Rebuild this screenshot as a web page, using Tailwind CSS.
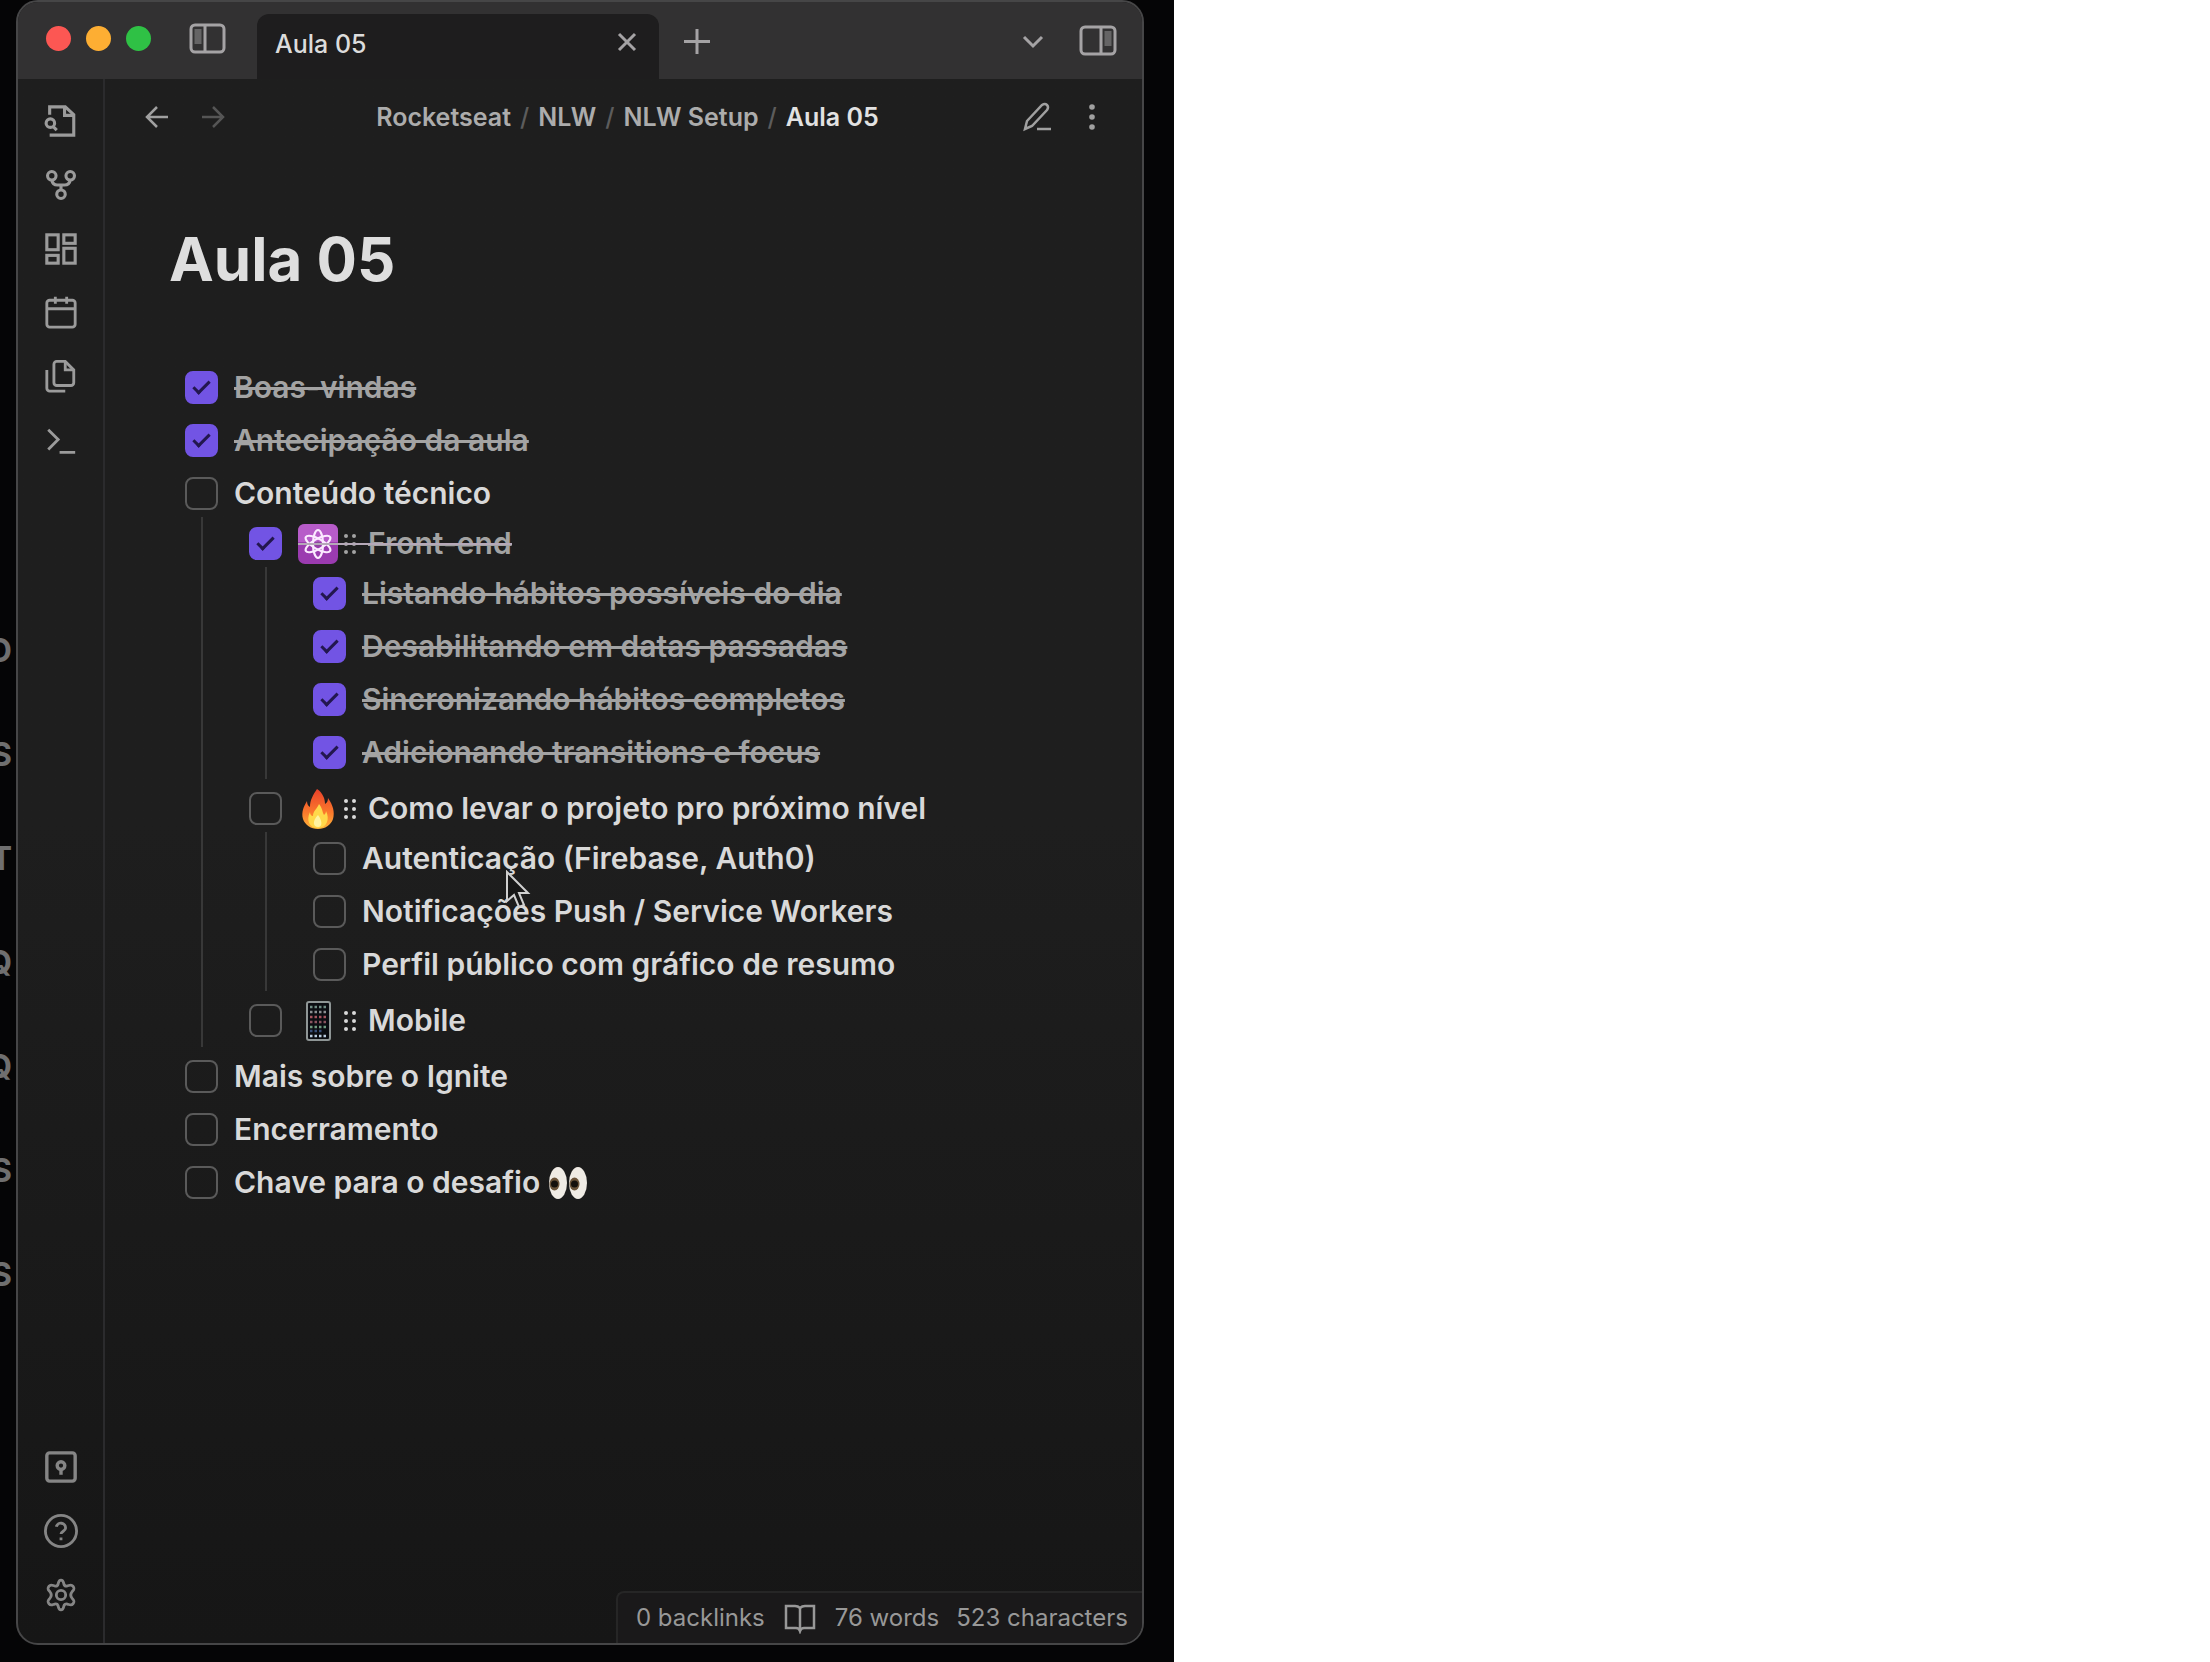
<!DOCTYPE html>
<html lang="pt-BR">
<head>
<meta charset="utf-8">
<meta name="viewport" content="width=device-width, initial-scale=1">
<title>Aula 05</title>
<script src="https://cdn.jsdelivr.net/npm/@tailwindcss/browser@4"></script>
</head>
<body class="bg-white font-['Inter',sans-serif]">
<svg class="hidden" aria-hidden="true">
  <symbol id="grip" viewBox="0 0 16 24"><g fill="currentColor"><circle cx="4" cy="4" r="2"/><circle cx="12" cy="4" r="2"/><circle cx="4" cy="12" r="2"/><circle cx="12" cy="12" r="2"/><circle cx="4" cy="20" r="2"/><circle cx="12" cy="20" r="2"/></g></symbol>
</svg>
<div class="relative flex min-h-screen w-[53.12%] overflow-hidden bg-[#050506] pr-[30px] pb-[17px] pl-4">

  <!-- Window behind, only its last letters show -->
  <div class="absolute top-[625px] left-0 flex w-3 flex-col items-end text-[32px] leading-[52px] font-bold text-[#6f6f6f] [&>span]:h-[104px]" aria-hidden="true">
    <span>O</span><span>S</span><span>T</span><span>Q</span><span>Q</span><span>S</span><span>S</span>
  </div>

  <div class="relative flex min-w-0 flex-1 flex-col overflow-hidden rounded-[22px] border-2 border-[#464647] bg-linear-to-b from-[#1e1e1e] from-50% to-[#161616]">
    <header class="flex h-[77px] shrink-0 bg-[#323132] text-[#a5a3a5]">
      <div class="flex w-[239px] shrink-0 items-start pt-6 pl-7">
        <div class="flex gap-[15px]">
          <button aria-label="Fechar" class="size-[25px] rounded-full bg-[#fc5753]"></button>
          <button aria-label="Minimizar" class="size-[25px] rounded-full bg-[#fdae33]"></button>
          <button aria-label="Expandir" class="size-[25px] rounded-full bg-[#2fc145]"></button>
        </div>
        <button aria-label="Barra lateral" class="-mt-1 ml-[37px]">
          <svg class="h-8 w-10" viewBox="0 0 40 32" fill="none" stroke="currentColor" stroke-width="3"><rect x="3" y="3" width="33" height="27" rx="4"/><path d="M17 3v27"/><path d="M10 7v15" stroke-width="7" opacity=".45"/></svg>
        </button>
      </div>
      <div class="mt-3 flex w-[402px] shrink-0 items-center justify-between rounded-t-xl bg-[#1e1d1e] pr-5 pb-3 pl-[18px]">
        <span class="pt-1.5 text-[25px] leading-8 font-medium text-[#dcdcdc]">Aula 05</span>
        <button aria-label="Fechar aba"><svg class="size-6" viewBox="0 0 24 24" fill="none" stroke="currentColor" stroke-width="3"><path d="M4 5l16 16M20 5L4 21"/></svg></button>
      </div>
      <div class="flex flex-1 items-start justify-between pt-6 pr-6 pl-6">
        <button aria-label="Nova aba"><svg class="h-8 w-7" viewBox="0 0 28 32" fill="none" stroke="currentColor" stroke-width="3"><path d="M14 3v25M1 15.500h26"/></svg></button>
        <div class="flex gap-[33px]">
          <button aria-label="Lista de abas"><svg class="h-8 w-6" viewBox="0 0 24 32" fill="none" stroke="currentColor" stroke-width="3"><path d="M3 11l9 9 9-9"/></svg></button>
          <button aria-label="Painel direito" class="-mt-1"><svg class="h-8 w-10" viewBox="0 0 40 32" fill="none" stroke="currentColor" stroke-width="3"><rect x="3" y="3" width="34" height="27" rx="4"/><path d="M23 3v27"/><path d="M30 7v15" stroke-width="7" opacity=".45"/></svg></button>
        </div>
      </div>
    </header>

    <div class="flex flex-1">
      <nav class="flex w-[87px] shrink-0 flex-col justify-between border-r-2 border-[#2b2b2d] pt-[25px] pb-[31px] text-[#9b9b9b]">
        <div class="flex flex-col items-center gap-[30px] [&_svg]:size-[34px]">
          <button aria-label="Buscar arquivo"><svg viewBox="0 0 24 24" fill="none" stroke="currentColor" stroke-width="2.200"><path d="M4 7.500V2h11l6 5.500V22H4"/><path d="M14.500 2v6H21"/><circle cx="4.500" cy="13.500" r="3"/><path d="M6.500 16l2.500 2.500"/></svg></button>
          <button aria-label="Grafo"><svg viewBox="0 0 24 24" fill="none" stroke="currentColor" stroke-width="2.200"><circle cx="5.500" cy="5.500" r="3"/><circle cx="18.500" cy="5.500" r="3"/><circle cx="12" cy="18.500" r="3"/><path d="M5.500 8.500q.5 3.500 4 3.500h5q3.500 0 4-3.500M12 12v3.500"/></svg></button>
          <button aria-label="Quadro"><svg viewBox="0 0 24 24" fill="none" stroke="currentColor" stroke-width="2.200"><rect x="2" y="2" width="8" height="10.500"/><rect x="14" y="2" width="8" height="6"/><rect x="14" y="11.500" width="8" height="10.500"/><rect x="2" y="16.500" width="8" height="5.500"/></svg></button>
          <button aria-label="Nota diária"><svg viewBox="0 0 24 24" fill="none" stroke="currentColor" stroke-width="2"><rect x="2" y="3" width="20" height="19" rx="2"/><path d="M2 9h20M8 .5v5M16 .5v5"/></svg></button>
          <button aria-label="Modelos"><svg viewBox="0 0 24 24" fill="none" stroke="currentColor" stroke-width="2"><path d="M15 1H9a2 2 0 0 0-2 2v13a2 2 0 0 0 2 2h10a2 2 0 0 0 2-2V7z"/><path d="M15 1v6h6M2 7v13a2 2 0 0 0 2 2h11"/></svg></button>
          <button aria-label="Comandos"><svg viewBox="0 0 24 24" fill="none" stroke="currentColor" stroke-width="2"><path d="M3 4l7 7-7 7M11 20h11"/></svg></button>
        </div>
        <div class="flex flex-col items-center gap-[30px] text-[#858585] [&_svg]:size-[34px]">
          <button aria-label="Cofre"><svg viewBox="0 0 24 24" fill="none" stroke="currentColor" stroke-width="2.400"><rect x="2" y="2" width="20" height="20" rx="2"/><circle cx="12" cy="11" r="2.700"/><path d="M12 13.500v4"/></svg></button>
          <button aria-label="Ajuda"><svg viewBox="0 0 24 24" fill="none" stroke="currentColor" stroke-width="2"><circle cx="12" cy="12" r="11"/><path d="M8.700 9a3.300 3.300 0 0 1 6.500 1c0 2-3.200 2.300-3.200 4.200M12 16.500v2"/></svg></button>
          <button aria-label="Configurações"><svg viewBox="0 0 24 24" fill="none" stroke="currentColor" stroke-width="2" stroke-linejoin="round"><path d="M12 1.500c1.600 0 1.700 1.300 2 2.600.3 1.200 1.300 1.800 2.500 1.500 1.500-.4 2.800-1.300 3.900.1 1.600 2.100.6 2.700-.5 3.900-1.200 1.400-1.200 3.400 0 4.800 1.100 1.200 2.100 1.800.5 3.900-1.100 1.400-2.400.5-3.900.1-1.200-.3-2.200.3-2.500 1.500-.3 1.300-.4 2.600-2 2.600s-1.700-1.300-2-2.600c-.3-1.200-1.300-1.800-2.500-1.500-1.500.4-2.800 1.300-3.900-.1-1.600-2.100-.6-2.700.5-3.900 1.200-1.400 1.200-3.400 0-4.800-1.100-1.200-2.100-1.800-.5-3.900 1.100-1.400 2.400-.5 3.900-.1 1.200.3 2.200-.3 2.500-1.500.3-1.300.4-2.600 2-2.600z"/><circle cx="12" cy="12" r="3.300"/></svg></button>
        </div>
      </nav>

      <main class="flex min-w-0 flex-1 flex-col">
        <div class="flex h-[76px] shrink-0 items-center justify-between px-10 text-[#a0a0a0]">
          <div class="flex gap-8">
            <button aria-label="Voltar"><svg class="size-6" viewBox="0 0 24 24" fill="none" stroke="currentColor" stroke-width="2.500"><path d="M23 12H2M12 2L2 12l10 10"/></svg></button>
            <button aria-label="Avançar" class="text-[#555]"><svg class="size-6" viewBox="0 0 24 24" fill="none" stroke="currentColor" stroke-width="2.500"><path d="M1 12h21M12 2l10 10-10 10"/></svg></button>
          </div>
          <nav class="flex gap-[9px] pl-2 text-[25px] leading-8 font-semibold whitespace-nowrap text-[#acacac]">
            <a href="#">Rocketseat</a><span class="font-medium text-[#5c5c5c]">/</span><a href="#">NLW</a><span class="font-medium text-[#5c5c5c]">/</span><a href="#">NLW Setup</a><span class="font-medium text-[#5c5c5c]">/</span><span class="text-[#e2e2e2]">Aula 05</span>
          </nav>
          <div class="flex gap-[30px]">
            <button aria-label="Editar"><svg class="size-[30px]" viewBox="0 0 30 30" fill="none" stroke="currentColor" stroke-width="2.500"><path d="M3 27l2-8L20 3q3-2 5 0t0 5L10 24zM15 27h14"/></svg></button>
            <button aria-label="Mais opções"><svg class="h-[30px] w-5" viewBox="0 0 20 30" fill="currentColor"><circle cx="10" cy="5" r="2.800"/><circle cx="10" cy="15" r="2.800"/><circle cx="10" cy="25" r="2.800"/></svg></button>
          </div>
        </div>

        <article class="flex-1 px-16 pt-[68px] text-[30px] leading-[53px] font-[560] whitespace-nowrap text-[#d9d9d9] [&_input]:grid [&_input]:size-[33px] [&_input]:shrink-0 [&_input]:appearance-none [&_input]:place-items-center [&_input]:rounded-lg [&_input]:border-2 [&_input]:border-[#5a5a5a] [&_input:checked]:border-[#7254e4] [&_input:checked]:bg-[#7254e4] [&_input:checked]:after:mb-1 [&_input:checked]:after:h-[17px] [&_input:checked]:after:w-[9px] [&_input:checked]:after:rotate-45 [&_input:checked]:after:border-r-[3px] [&_input:checked]:after:border-b-[3px] [&_input:checked]:after:border-[#23174f] [&_input:checked]:after:content-[''] [&_label]:flex [&_label]:h-[53px] [&_label]:items-center [&_label]:gap-4">
          <h1 class="text-[60px] leading-[72px] font-bold text-[#dedede]">Aula 05</h1>
          <ul class="mt-[66px] pl-4">
            <li><label><input type="checkbox" checked><s class="text-[#a3a3a3]">Boas-vindas</s></label></li>
            <li><label><input type="checkbox" checked><s class="text-[#a3a3a3]">Antecipação da aula</s></label></li>
            <li>
              <label><input type="checkbox"><span>Conteúdo técnico</span></label>
              <ul class="-mt-[3px] mb-[3px] ml-4 border-l-2 border-[#383838] pl-[46px]">
                <li>
                  <label><input type="checkbox" checked>
                    <s class="relative flex items-center text-[#a3a3a3] after:absolute after:inset-x-0 after:top-[26px] after:h-0.5 after:bg-[#b5a8b8]">
                      <svg class="size-10" viewBox="0 0 40 40" fill="none" role="img" aria-label="átomo"><rect width="40" height="40" rx="7" fill="#9b3bb0"/><path d="M0 7q0-7 7-7h26q7 0 7 7v11H0z" fill="#b75cc9"/><g stroke="#fbeaff" stroke-width="2.200"><ellipse cx="20" cy="20" rx="5" ry="14"/><ellipse cx="20" cy="20" rx="5" ry="14" transform="rotate(60 20 20)"/><ellipse cx="20" cy="20" rx="5" ry="14" transform="rotate(120 20 20)"/></g><circle cx="20" cy="20" r="2.500" fill="#8a4a9a"/></svg>
                      <svg class="mr-2.5 ml-1 h-6 w-4" aria-hidden="true"><use href="#grip"/></svg>Front-end</s></label>
                  <ul class="-mt-[3px] mb-[3px] ml-4 border-l-2 border-[#383838] pl-[46px]">
                    <li><label><input type="checkbox" checked><s class="text-[#a3a3a3]">Listando hábitos possíveis do dia</s></label></li>
                    <li><label><input type="checkbox" checked><s class="text-[#a3a3a3]">Desabilitando em datas passadas</s></label></li>
                    <li><label><input type="checkbox" checked><s class="text-[#a3a3a3]">Sincronizando hábitos completos</s></label></li>
                    <li><label><input type="checkbox" checked><s class="text-[#a3a3a3]">Adicionando transitions e focus</s></label></li>
                  </ul>
                </li>
                <li>
                  <label><input type="checkbox">
                    <span class="flex items-center">
                      <svg class="size-10" viewBox="0 0 40 40" role="img" aria-label="fogo"><defs><linearGradient id="fire" x1="0" y1="0" x2="0" y2="1"><stop offset="0" stop-color="#e8402a"/><stop offset=".6" stop-color="#fb7a2c"/><stop offset="1" stop-color="#fdb53a"/></linearGradient></defs><path d="M19 0c6 4 8 10 8 15 2-1 3-3 3-6 5 7 7 14 5 21-2 6-8 10-15 10S7 36 5 30c-2-7 1-13 4-18 0 3 1 5 3 6 0-7 3-12 7-18z" fill="url(#fire)"/><path d="M21 15c4 5 3 8 5 11 1-1 2-2 2-4 4 8 1 17-8 17S8 31 12 23c0 2 1 4 3 4 0-5 4-7 6-12z" fill="#ffd84a"/><path d="M20 26c4 5 5 12 0 12s-6-6 0-12z" fill="#fff3a0"/></svg>
                      <svg class="mr-2.5 ml-1 h-6 w-4" aria-hidden="true"><use href="#grip"/></svg>Como levar o projeto pro próximo nível</span></label>
                  <ul class="relative -mt-[3px] mb-[3px] ml-4 border-l-2 border-[#383838] pl-[46px]">
                    <li><label><input type="checkbox"><span>Autenticação (Firebase, Auth0)</span></label></li>
                    <li><label><input type="checkbox"><span>Notificações Push / Service Workers</span></label></li>
                    <li><label><input type="checkbox"><span>Perfil público com gráfico de resumo</span></label></li>
                    <li class="absolute top-[38px] left-[238px]" aria-hidden="true"><svg class="h-10 w-7" viewBox="0 0 28 40"><path d="M2 2v29l7-6 5 12 5-2-5-12h9z" fill="#161616" fill-opacity=".7" stroke="#d0d0d0" stroke-width="2"/></svg></li>
                  </ul>
                </li>
                <li>
                  <label><input type="checkbox">
                    <span class="flex items-center">
                      <svg class="size-10" viewBox="0 0 40 40" role="img" aria-label="celular"><rect x="9" y="1" width="23" height="38" rx="2" fill="#0b0d12" stroke="#8f9696" stroke-width="2"/><g stroke-width="2.500" stroke-dasharray="2.500 2"><path d="M12 6h17" stroke="#6f8c84"/><path d="M12 11h17" stroke="#8b8f92"/><path d="M12 16h17" stroke="#a5555f"/><path d="M12 21h17" stroke="#8a5560"/><path d="M12 26h17" stroke="#6f9a80"/><path d="M12 30h12" stroke="#39507a"/><path d="M12 35h17" stroke="#b9ccdf"/></g></svg>
                      <svg class="mr-2.5 ml-1 h-6 w-4" aria-hidden="true"><use href="#grip"/></svg>Mobile</span></label>
                </li>
              </ul>
            </li>
            <li><label><input type="checkbox"><span>Mais sobre o Ignite</span></label></li>
            <li><label><input type="checkbox"><span>Encerramento</span></label></li>
            <li><label><input type="checkbox"><span class="flex items-center gap-2">Chave para o desafio
              <svg class="h-9 w-10" viewBox="0 0 40 36" role="img" aria-label="olhos"><ellipse cx="10" cy="18" rx="9" ry="16" fill="#efebe4"/><ellipse cx="30" cy="18" rx="9" ry="16" fill="#efebe4"/><ellipse cx="6.500" cy="19" rx="5" ry="6.500" fill="#6a5238"/><ellipse cx="26.500" cy="19" rx="5" ry="6.500" fill="#6a5238"/><circle cx="6.500" cy="19" r="3.500" fill="#15100c"/><circle cx="26.500" cy="19" r="3.500" fill="#15100c"/></svg></span></label></li>
          </ul>
        </article>

        <footer class="flex h-[52px] items-center gap-[17px] self-end rounded-tl-lg border-t-2 border-l-2 border-[#262626] bg-[#1a191a] pr-3.5 pl-[18px] text-2xl leading-8 whitespace-nowrap text-[#989898]">
          <span>0 backlinks</span>
          <svg class="mx-0.5 h-8 w-8" viewBox="0 0 32 32" fill="none" stroke="currentColor" stroke-width="2.500" role="img" aria-label="leitura"><path d="M16 6q-2-2-5-2H2v22h10q3 0 4 3 1-3 4-3h10V4h-9q-3 0-5 2v23"/></svg>
          <span>76 words</span>
          <span>523 characters</span>
        </footer>
      </main>
    </div>
  </div>
</div>
</body>
</html>
